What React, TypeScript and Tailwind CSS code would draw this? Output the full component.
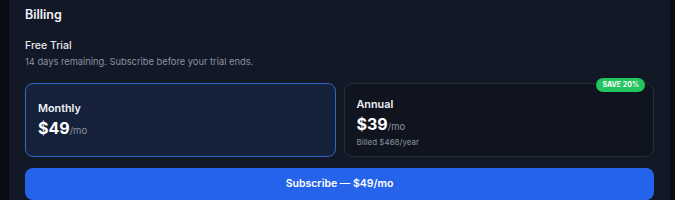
export default function App() {
  return (
    <div
      className="flex h-[200px] w-[675px] overflow-hidden bg-[#090c13]"
      style={{ fontFamily: "Inter, 'Noto Sans', sans-serif" }}
    >
      <div className="ml-[9px] w-[661px] bg-[#121826] px-4 pt-[5px]">
        <h2 className="text-[12.5px] font-semibold leading-5 text-[#f1f3f7]">
          Billing
        </h2>

        <div className="mt-[13px]">
          <p className="text-[10.5px] font-medium leading-4 text-[#e6e8ee]">
            Free Trial
          </p>
          <p className="mt-[1px] text-[9.3px] leading-[14px] text-[#8a91a0]">
            14 days remaining. Subscribe before your trial ends.
          </p>
        </div>

        <div className="mt-[14px] grid h-[74px] grid-cols-2 gap-2">
          {/* Monthly (selected) */}
          <div className="flex flex-col justify-center rounded-lg border border-[#3368c4] bg-[#15203b] px-3">
            <p className="text-[10.8px] font-semibold leading-4 text-[#eef1f6]">
              Monthly
            </p>
            <p className="mt-[2px] leading-[18px] text-white">
              <span className="text-[16px] font-bold">$49</span>
              <span className="text-[9.5px] text-[#8a91a0]">/mo</span>
            </p>
          </div>

          {/* Annual */}
          <div className="relative flex flex-col justify-center rounded-lg border border-[#272d39] bg-[#0f141e] px-3 pt-[4px]">
            <span className="absolute -top-[6px] right-[8px] rounded-full bg-[#22c55e] px-[6px] text-[7px] font-bold leading-[14px] text-white">
              SAVE 20%
            </span>
            <p className="text-[10.8px] font-semibold leading-4 text-[#eef1f6]">
              Annual
            </p>
            <p className="mt-[2px] leading-[18px] text-white">
              <span className="text-[16px] font-bold">$39</span>
              <span className="text-[9.5px] text-[#8a91a0]">/mo</span>
            </p>
            <p className="text-[8px] leading-3 text-[#8a91a0]">
              Billed $468/year
            </p>
          </div>
        </div>

        <button className="mt-[11px] flex h-[32px] w-full items-center justify-center rounded-lg bg-[#2563eb] text-[10.5px] font-semibold text-white">
          Subscribe — $49/mo
        </button>
      </div>
    </div>
  );
}
